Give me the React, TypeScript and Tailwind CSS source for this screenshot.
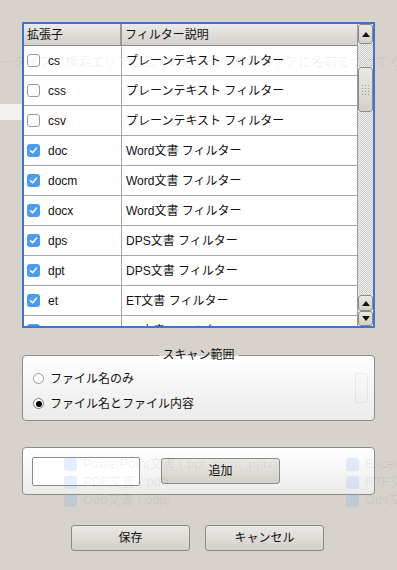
import React from 'react';

const font = "font-['Liberation_Sans','Noto_Sans_CJK_JP',sans-serif]";

const rows = [
  { ext: 'cs', desc: 'プレーンテキスト フィルター', on: false },
  { ext: 'css', desc: 'プレーンテキスト フィルター', on: false },
  { ext: 'csv', desc: 'プレーンテキスト フィルター', on: false },
  { ext: 'doc', desc: 'Word文書 フィルター', on: true },
  { ext: 'docm', desc: 'Word文書 フィルター', on: true },
  { ext: 'docx', desc: 'Word文書 フィルター', on: true },
  { ext: 'dps', desc: 'DPS文書 フィルター', on: true },
  { ext: 'dpt', desc: 'DPS文書 フィルター', on: true },
  { ext: 'et', desc: 'ET文書 フィルター', on: true },
  { ext: 'ett', desc: 'ET文書 フィルター', on: true },
];

function Check({ on }: { on: boolean }) {
  if (!on) {
    return <div className="w-[13px] h-[13px] rounded-[3px] border border-[#9a9a9a] bg-white shrink-0" />;
  }
  return (
    <div className="w-[13px] h-[13px] rounded-[3px] bg-[#4a9bf2] flex items-center justify-center shrink-0">
      <svg width="9" height="9" viewBox="0 0 9 9">
        <path d="M1.5 4.8 L3.6 6.8 L7.6 2" stroke="white" strokeWidth="1.5" fill="none" strokeLinecap="round" strokeLinejoin="round" />
      </svg>
    </div>
  );
}

function Arrow({ up }: { up: boolean }) {
  return (
    <svg width="8" height="5" viewBox="0 0 8 5">
      <path d={up ? 'M0 5 L4 0 L8 5 Z' : 'M0 0 L4 5 L8 0 Z'} fill="#111" />
    </svg>
  );
}

function Ghost({ label }: { label: string }) {
  return (
    <div className="flex items-center gap-[6px] h-[18px]">
      <div className="w-[13px] h-[13px] rounded-[3px] bg-[#4a9bf2]/15" />
      <span>{label}</span>
    </div>
  );
}

const btn =
  'flex items-center justify-center rounded-[3px] border border-[#8c8a86] bg-[linear-gradient(to_bottom,#ebe9e5,#d3d0ca)] text-[12px] text-[#111]';

const checker =
  'bg-[repeating-conic-gradient(#c9c9c9_0_25%,#f4f4f4_0_50%)] bg-[length:2px_2px]';

export default function App() {
  return (
    <div className={`relative w-[397px] h-[570px] overflow-hidden bg-[#d7d3cc] ${font}`}>
      <div className="absolute left-0 top-[104px] w-[22px] h-[16px] bg-white/70" />

      <div className="relative flex flex-col pt-[22px] px-[22px]">
        {/* table */}
        <div className="h-[306px] border-2 border-[#3d73d3] bg-white flex">
          <div className="flex-1 flex flex-col overflow-hidden">
            <div className="h-[22px] shrink-0 flex border-b border-[#8a8a8a] bg-[linear-gradient(to_bottom,#ecebe7,#d3d0ca)] text-[12px] text-[#111]">
              <div className="w-[98px] pl-[3px] flex items-center border-r-2 border-[#9a9894]">拡張子</div>
              <div className="flex-1 pl-[3px] flex items-center">フィルター説明</div>
            </div>
            {rows.map(r => (
              <div key={r.ext} className="h-[30px] shrink-0 flex border-b border-[#a8a8a8] text-[12px] text-[#111]">
                <div className="w-[98px] pl-[3px] flex items-center gap-[8px] border-r border-[#a8a8a8]">
                  <Check on={r.on} />
                  <span>{r.ext}</span>
                </div>
                <div className="flex-1 pl-[4px] flex items-center">{r.desc}</div>
              </div>
            ))}
          </div>
          {/* scrollbar */}
          <div className="w-[16px] shrink-0 flex flex-col border-l border-[#9c9c9c]">
            <div className={`${btn} h-[20px] rounded-[2px]`}>
              <Arrow up />
            </div>
            <div className={`h-[23px] ${checker}`} />
            <div className={`${btn} h-[45px] rounded-[2px] flex-col`}>
              <div className="grid grid-cols-3 gap-[2px]">
                {Array.from({ length: 12 }).map((_, i) => (
                  <div key={i} className="w-[1px] h-[1px] bg-[#9a9a9a]" />
                ))}
              </div>
            </div>
            <div className={`flex-1 ${checker}`} />
            <div className={`${btn} h-[16px] rounded-[2px]`}>
              <Arrow up />
            </div>
            <div className={`${btn} h-[15px] rounded-[2px]`}>
              <Arrow up={false} />
            </div>
          </div>
        </div>

        {/* scan range group */}
        <div className="relative mt-[27px] h-[66px] rounded-[4px] border border-[#8f8e8b] bg-[linear-gradient(to_bottom,#ffffff,#ebebea)] flex flex-col justify-center gap-[7px] pl-[10px] text-[12px] text-[#111]">
          <div className="absolute left-1/2 -translate-x-1/2 -top-[10px] px-[4px] leading-[18px] bg-[linear-gradient(to_bottom,#d7d3cc_55%,#ffffff_55%)]">
            スキャン範囲
          </div>
          <div className="flex items-center gap-[6px] mt-[6px]">
            <div className="w-[11px] h-[11px] rounded-full border border-[#9a9a9a] bg-white" />
            <span>ファイル名のみ</span>
          </div>
          <div className="flex items-center gap-[6px]">
            <div className="w-[11px] h-[11px] rounded-full border border-[#777] bg-white flex items-center justify-center">
              <div className="w-[6px] h-[6px] rounded-full bg-black" />
            </div>
            <span>ファイル名とファイル内容</span>
          </div>
        </div>

        {/* add group */}
        <div className="mt-[26px] h-[48px] rounded-[4px] border border-[#8f8e8b] bg-[linear-gradient(to_bottom,#ffffff,#ebebea)] flex items-center pl-[9px] gap-[21px]">
          <div className="w-[108px] h-[29px] bg-white border border-[#8c8c8c] rounded-[2px]" />
          <div className={`${btn} w-[119px] h-[26px]`}>追加</div>
        </div>

        {/* bottom buttons */}
        <div className="mt-[30px] flex justify-center gap-[15px] pr-[2px]">
          <div className={`${btn} w-[119px] h-[26px]`}>保存</div>
          <div className={`${btn} w-[119px] h-[26px]`}>キャンセル</div>
        </div>
      </div>

      {/* faded window showing through the dialog */}
      <div className="absolute inset-0 pointer-events-none text-[13px] text-black/[0.07] whitespace-nowrap">
        <div className="absolute left-0 top-[52px]">
          ータイプに検索エリアとしての追加して検索エリアに名前をつけてください
        </div>
        <div className="absolute left-[355px] top-[373px] w-[13px] h-[30px] rounded-[2px] border border-black/[0.06]" />
        <div className="absolute left-[64px] top-[455px] flex flex-col">
          <Ghost label="PowerPoint文書 (.ppt .potm .pptx)" />
          <Ghost label="PDF文書 (.pdf)" />
          <Ghost label="Odp文書 (.odp)" />
        </div>
        <div className="absolute left-[346px] top-[455px] flex flex-col">
          <Ghost label="Excel文" />
          <Ghost label="RTF文" />
          <Ghost label="Ods文" />
        </div>
      </div>
    </div>
  );
}
